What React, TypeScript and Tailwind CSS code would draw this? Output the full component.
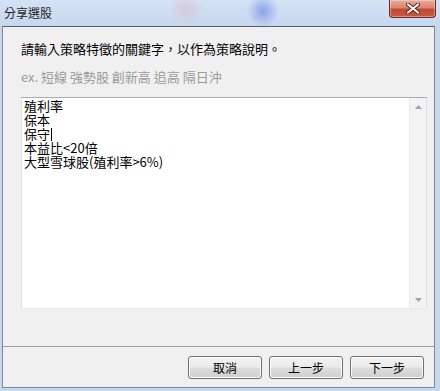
import React from 'react';

const cjk = "font-['Noto_Sans_CJK_TC','Noto_Sans',sans-serif]";

function CloseButton() {
  return (
    <div className="w-[47px] h-[18px] mr-[4px] rounded-b-[4px] border border-t-0 border-[#6b2b24] bg-[linear-gradient(to_bottom,#e9a99a_0%,#d98773_45%,#c04a33_55%,#c95a3e_100%)] shadow-[inset_0_0_0_1px_rgba(255,255,255,0.35)] flex items-center justify-center">
      <svg width="14" height="11" viewBox="0 0 14 11">
        <path d="M2 1.5 L12 9.5 M12 1.5 L2 9.5" stroke="#5a1d16" strokeWidth="4" strokeLinecap="round" />
        <path d="M2 1.5 L12 9.5 M12 1.5 L2 9.5" stroke="#ffffff" strokeWidth="2.2" strokeLinecap="round" />
      </svg>
    </div>
  );
}

function WinButton({ label }: { label: string }) {
  return (
    <button className={`w-[74px] h-[23px] rounded-[3px] border border-[#707070] bg-[linear-gradient(to_bottom,#f2f2f2_0%,#ebebeb_48%,#dddddd_52%,#cfcfcf_100%)] shadow-[inset_0_0_0_1px_#fcfcfc] text-[12px] text-black ${cjk} flex items-center justify-center`}>
      {label}
    </button>
  );
}

function ScrollArrow({ up }: { up?: boolean }) {
  return (
    <div className="h-[17px] flex items-center justify-center">
      <svg width="7" height="4" viewBox="0 0 7 4">
        <path d={up ? 'M0 4 L3.5 0 L7 4 Z' : 'M0 0 L3.5 4 L7 0 Z'} fill="#a3a3a3" />
      </svg>
    </div>
  );
}

export default function App() {
  const lines = ['殖利率', '保本', '保守', '本益比<20倍', '大型雪球股(殖利率>6%)'];

  return (
    <div className={`w-[440px] h-[391px] flex flex-col bg-[#c6d8ee] ${cjk}`}>
      {/* 標題列 */}
      <div className="h-[26px] flex items-start justify-between bg-[radial-gradient(ellipse_18px_16px_at_186px_10px,rgba(216,196,214,0.8),transparent),radial-gradient(ellipse_16px_16px_at_263px_11px,rgba(118,142,232,0.75),transparent),linear-gradient(to_bottom,#d4e2f4,#c6d8ef)]">
        <span className="pl-[4px] pt-[5px] text-[12px] leading-[16px] text-[#1e1e1e]">分享選股</span>
        <CloseButton />
      </div>

      {/* 本文 */}
      <div className="flex-1 ml-[2px] mr-[5px] flex flex-col border border-[#7d8b9c] border-t-[#555f6b] bg-[#f0f0f0]">
        <div className="h-[319px] flex flex-col pl-[18px] pr-[7px] pt-[13px]">
          <p className="text-[13px] leading-[17px] text-black">請輸入策略特徵的關鍵字，以作為策略說明。</p>
          <p className="mt-[11px] text-[13px] leading-[17px] text-[#9b9b9b]">ex. 短線 強勢股 創新高 追高 隔日沖</p>
          <div className="mt-[12px] h-[212px] flex border border-[#abadb3] border-l-[#dbdfe6] border-r-[#dbdfe6] border-b-[#e3e9ef] bg-white">
            <div className="flex-1 pl-[2px] pt-[1px] text-[13px] leading-[14px] text-black">
              {lines.map((l, i) => (
                <div key={l} className="flex items-center">
                  {l}
                  {i === 2 && <span className="inline-block w-px h-[13px] bg-black ml-[1px]" />}
                </div>
              ))}
            </div>
            <div className="w-[17px] flex flex-col justify-between bg-[#f3f3f3] border-l border-[#ebebeb]">
              <ScrollArrow up />
              <ScrollArrow />
            </div>
          </div>
        </div>
        <div className="flex-1 border-t border-[#a0a0a0] flex justify-end items-start pt-[9px] pr-[10px] gap-[7px]">
          <WinButton label="取消" />
          <WinButton label="上一步" />
          <WinButton label="下一步" />
        </div>
      </div>
      <div className="h-[3px]" />
    </div>
  );
}
